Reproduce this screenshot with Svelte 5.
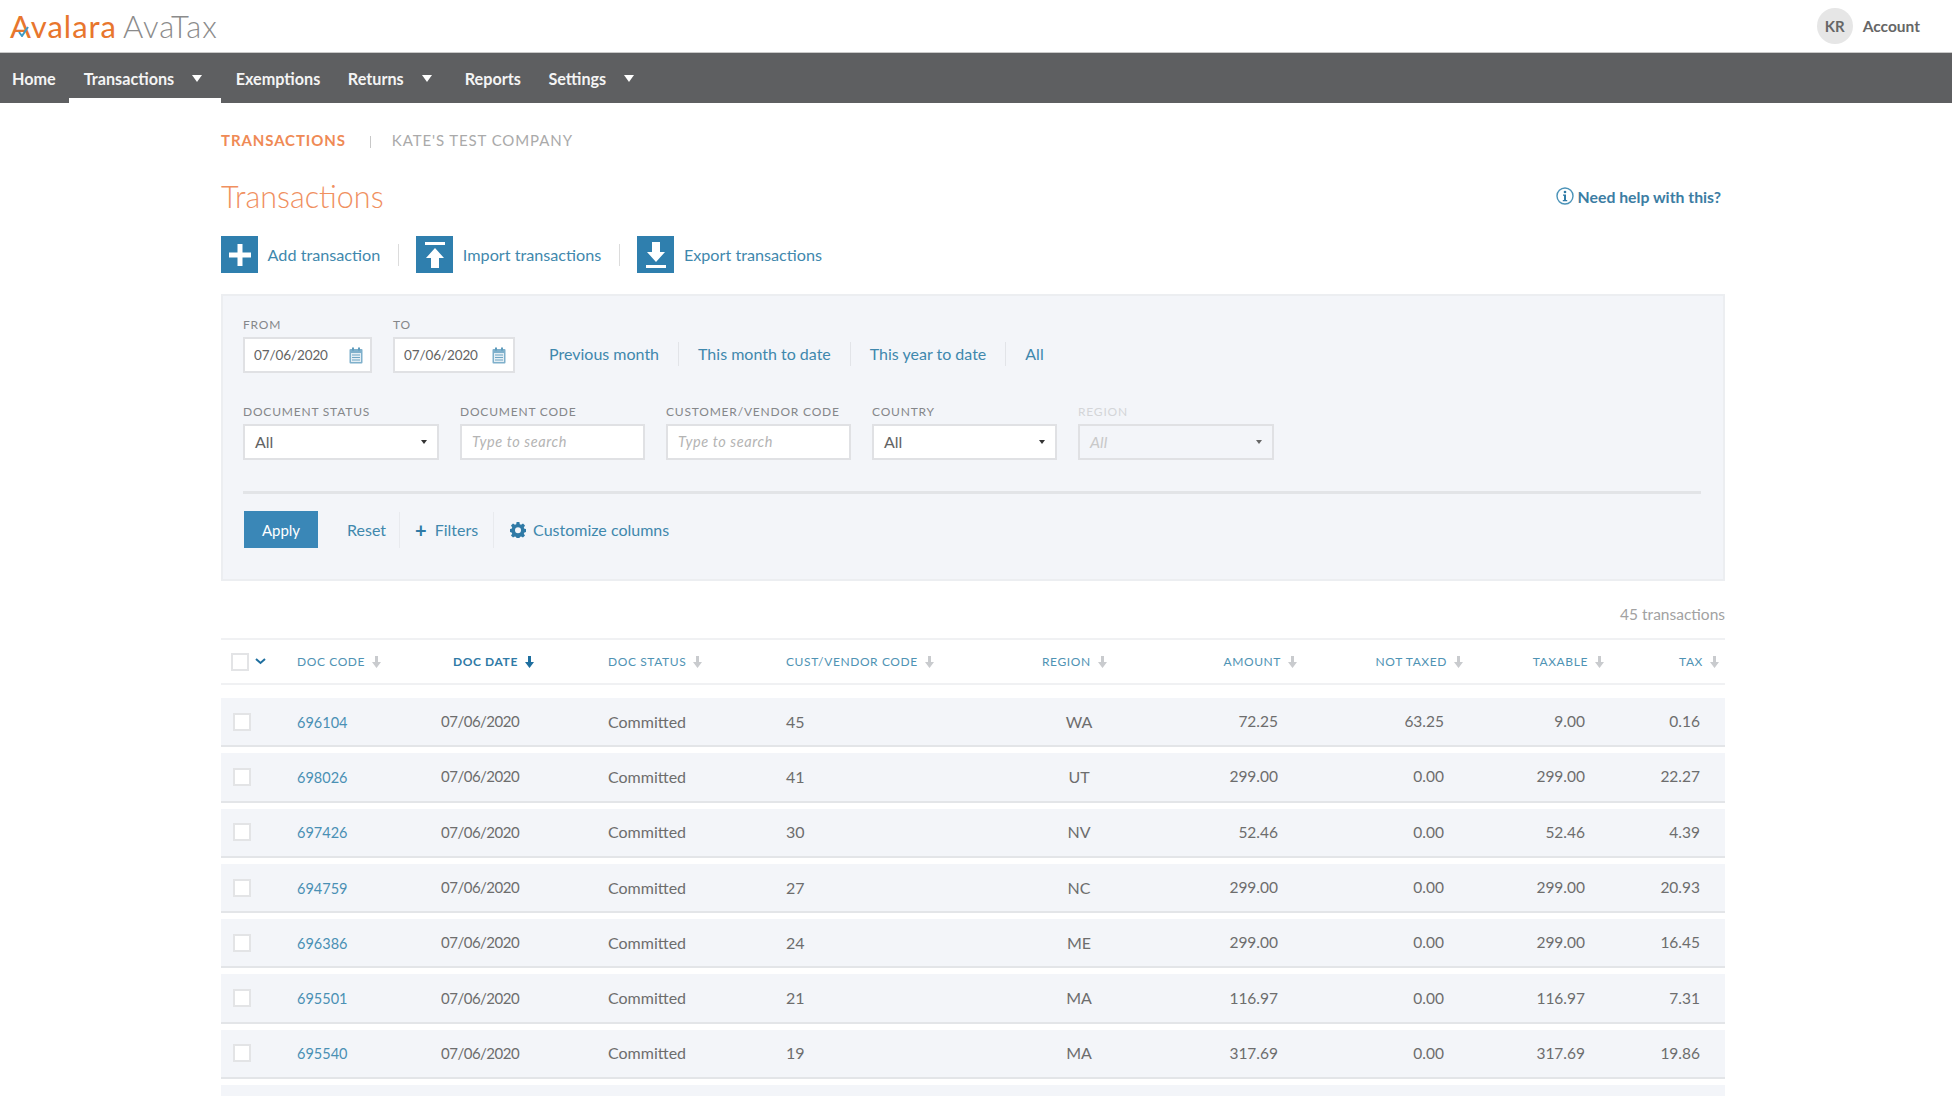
<script lang="ts">
  // Transaction rows as shown on the first page of the list.
  const rows = [
    { code: '696104', cust: '45', region: 'WA', amount: '72.25', notTaxed: '63.25', taxable: '9.00', tax: '0.16' },
    { code: '698026', cust: '41', region: 'UT', amount: '299.00', notTaxed: '0.00', taxable: '299.00', tax: '22.27' },
    { code: '697426', cust: '30', region: 'NV', amount: '52.46', notTaxed: '0.00', taxable: '52.46', tax: '4.39' },
    { code: '694759', cust: '27', region: 'NC', amount: '299.00', notTaxed: '0.00', taxable: '299.00', tax: '20.93' },
    { code: '696386', cust: '24', region: 'ME', amount: '299.00', notTaxed: '0.00', taxable: '299.00', tax: '16.45' },
    { code: '695501', cust: '21', region: 'MA', amount: '116.97', notTaxed: '0.00', taxable: '116.97', tax: '7.31' },
    { code: '695540', cust: '19', region: 'MA', amount: '317.69', notTaxed: '0.00', taxable: '317.69', tax: '19.86' }
  ];

  const columns = [
    { label: 'Doc code', cls: '' },
    { label: 'Doc date', cls: 'date', active: true },
    { label: 'Doc status', cls: '' },
    { label: 'Cust/vendor code', cls: '' },
    { label: 'Region', cls: 'region' },
    { label: 'Amount', cls: 'num' },
    { label: 'Not taxed', cls: 'num' },
    { label: 'Taxable', cls: 'num' },
    { label: 'Tax', cls: 'num' }
  ];
</script>

{#snippet calendar()}
  <svg class="cal" width="14" height="17" viewBox="0 0 14 17">
    <rect x="0.5" y="2" width="13" height="14.5" rx="1" fill="#7fb0cb" />
    <rect x="2" y="6" width="10" height="9" fill="#e4eef4" />
    <rect x="3" y="0.5" width="2" height="3" fill="#5f9cbd" />
    <rect x="9" y="0.5" width="2" height="3" fill="#5f9cbd" />
    <path d="M3 8h8M3 10.5h8M3 13h8" stroke="#6fa6c4" stroke-width="1" />
  </svg>
{/snippet}

{#snippet sortArrow(active: boolean)}
  <svg class="sort" class:active width="9" height="12" viewBox="0 0 9 12">
    <path d="M3 0h3v6h3L4.500 12 0 6h3z" fill="currentColor" />
  </svg>
{/snippet}

<div class="page">
  <header class="topbar">
    <div class="logo">
      <span class="logo-mark">Avalara</span>
      <svg class="logo-check" width="13" height="11" viewBox="0 0 13 11">
        <path d="M1 6l3 4 6-9" fill="none" stroke="#3f9ac4" stroke-width="2" />
      </svg>
      <span class="logo-product">AvaTax</span>
    </div>
    <div class="account">
      <span class="avatar">KR</span>
      <span class="account-label">Account</span>
    </div>
  </header>

  <nav class="nav">
    <span class="nav-item home">Home</span>
    <span class="nav-item current">Transactions<i class="caret"></i></span>
    <span class="nav-item plain">Exemptions</span>
    <span class="nav-item menu">Returns<i class="caret"></i></span>
    <span class="nav-item plain">Reports</span>
    <span class="nav-item menu">Settings<i class="caret"></i></span>
  </nav>

  <main class="content">
    <div class="breadcrumb">
      <span class="crumb-current">Transactions</span>
      <span class="crumb-sep"></span>
      <span class="crumb-company">Kate's test company</span>
    </div>

    <div class="title-row">
      <h1>Transactions</h1>
      <a class="help" href="#help">
        <svg width="18" height="18" viewBox="0 0 18 18">
          <circle cx="9" cy="9" r="8" fill="none" stroke="#4b93b8" stroke-width="1.400" />
          <circle cx="9" cy="5" r="1.300" fill="#2f7aa6" />
          <path d="M7 7.500h3v5.500h1.200v1.200H6.800V13H8V8.700H7z" fill="#2f7aa6" />
        </svg>
        Need help with this?
      </a>
    </div>

    <div class="actions">
      <a class="action" href="#add">
        <span class="action-icon">
          <svg width="22" height="22" viewBox="0 0 22 22"><path d="M8.500 0h5v8.500H22v5h-8.500V22h-5v-8.500H0v-5h8.500z" fill="#fff" /></svg>
        </span>
        Add transaction
      </a>
      <span class="action-sep"></span>
      <a class="action" href="#import">
        <span class="action-icon">
          <svg width="22" height="28" viewBox="0 0 22 28"><path d="M1 1h20v3H1zM11 7l9 10h-5v10H7V17H2z" fill="#fff" /></svg>
        </span>
        Import transactions
      </a>
      <span class="action-sep"></span>
      <a class="action" href="#export">
        <span class="action-icon">
          <svg width="22" height="28" viewBox="0 0 22 28"><path d="M7 1h8v10h5L11 21 2 11h5zM1 24h20v3H1z" fill="#fff" /></svg>
        </span>
        Export transactions
      </a>
    </div>

    <section class="filters">
      <div class="date-row">
        <label class="field">
          <span class="label">From</span>
          <span class="input date-input from">07/06/2020 {@render calendar()}</span>
        </label>
        <label class="field">
          <span class="label">To</span>
          <span class="input date-input to">07/06/2020 {@render calendar()}</span>
        </label>
        <div class="presets">
          <a href="#prev">Previous month</a>
          <a href="#month">This month to date</a>
          <a href="#year">This year to date</a>
          <a href="#all">All</a>
        </div>
      </div>

      <div class="select-row">
        <label class="field w-status">
          <span class="label">Document status</span>
          <span class="input select">All<i class="mini-caret"></i></span>
        </label>
        <label class="field w-code">
          <span class="label">Document code</span>
          <span class="input placeholder">Type to search</span>
        </label>
        <label class="field w-code">
          <span class="label">Customer/vendor code</span>
          <span class="input placeholder">Type to search</span>
        </label>
        <label class="field w-code">
          <span class="label">Country</span>
          <span class="input select">All<i class="mini-caret"></i></span>
        </label>
        <label class="field w-status disabled">
          <span class="label">Region</span>
          <span class="input select">All<i class="mini-caret"></i></span>
        </label>
      </div>

      <div class="button-row">
        <button class="apply">Apply</button>
        <a class="tool reset" href="#reset">Reset</a>
        <a class="tool filters-link" href="#filters"><span class="plus">+</span>Filters</a>
        <a class="tool customize" href="#columns">
          <svg width="16" height="16" viewBox="0 0 16 16">
            <path fill="#2f7aa6" fill-rule="evenodd" d="M6.600 0h2.800l.4 2.200 1.300.6 1.900-1.200 2 2-1.200 1.900.6 1.300 2.100.4v2.800l-2.100.4-.6 1.300 1.200 1.900-2 2-1.900-1.200-1.300.6-.4 2.100H6.600l-.4-2.100-1.300-.6L3 15.600l-2-2 1.200-1.900-.6-1.300L-.500 10V7.200l2.100-.4.600-1.300L1 3.600l2-2 1.900 1.200 1.300-.6zM8 5.200a3 3 0 1 0 0 6 3 3 0 0 0 0-6z" />
          </svg>
          Customize columns
        </a>
      </div>
    </section>

    <div class="count">45 transactions</div>

    <div class="thead grid">
      <div class="head-check">
        <span class="checkbox"></span>
        <svg width="11" height="7" viewBox="0 0 11 7"><path d="M1 1l4.500 4L10 1" fill="none" stroke="#1f6f9f" stroke-width="2" /></svg>
      </div>
      {#each columns as col}
        <div class="th {col.cls}" class:active={col.active}>
          <span>{col.label}</span>{@render sortArrow(!!col.active)}
        </div>
      {/each}
    </div>

    <div class="tbody">
      {#each rows as row}
        <div class="tr grid">
          <div class="cell-check"><span class="checkbox"></span></div>
          <div><a class="doc-link" href="#doc">{row.code}</a></div>
          <div class="cell-date">07/06/2020</div>
          <div>Committed</div>
          <div>{row.cust}</div>
          <div class="cell-region">{row.region}</div>
          <div class="cell-num">{row.amount}</div>
          <div class="cell-num">{row.notTaxed}</div>
          <div class="cell-num">{row.taxable}</div>
          <div class="cell-num">{row.tax}</div>
        </div>
      {/each}
      <div class="tr grid"></div>
    </div>
  </main>
</div>

<style>
  :global(body) {
    margin: 0;
    background: #fff;
  }

  .page {
    height: 1096px;
    overflow: hidden;
    font-family: Lato, "Open Sans", sans-serif;
    font-size: 16px;
    color: #6d6d6d;
  }

  a {
    color: #3f88ad;
    text-decoration: none;
  }

  /* top bar */
  .topbar {
    height: 52px;
    display: flex;
    align-items: center;
    justify-content: space-between;
    padding: 0 32px 0 10px;
    border-bottom: 1px solid #c9c9c9;
    box-sizing: content-box;
  }

  .logo {
    position: relative;
    display: flex;
    align-items: baseline;
    gap: 6px;
    font-size: 31px;
    line-height: 1;
  }

  .logo-mark {
    color: #e8762d;
    letter-spacing: 1px;
  }

  .logo-product {
    color: #8b8b8b;
    font-weight: 300;
    letter-spacing: 0.9px;
  }

  .logo-check {
    position: absolute;
    left: 8px;
    top: 15px;
  }

  .account {
    display: flex;
    align-items: center;
    gap: 10px;
  }

  .avatar {
    width: 36px;
    height: 36px;
    border-radius: 50%;
    background: #e6e6e6;
    display: flex;
    align-items: center;
    justify-content: center;
    font-weight: 700;
    font-size: 15px;
    color: #666;
  }

  .account-label {
    color: #666;
    font-weight: 700;
    font-size: 15.500px;
  }

  /* nav */
  .nav {
    height: 50px;
    background: #5e5f61;
    display: flex;
    align-items: stretch;
    color: #fff;
    font-size: 16.200px;
  }

  .nav-item {
    display: flex;
    align-items: center;
    padding: 0 14.500px;
    color: #f4f4f4;
    font-weight: 700;
  }

  .nav-item.home {
    padding: 0 13.500px 0 12px;
  }

  .nav-item.plain {
    padding-right: 13px;
  }

  .nav-item.menu {
    padding-right: 18.500px;
  }

  .nav-item.current {
    position: relative;
    padding-right: 19px;
  }

  .nav-item.current::after {
    content: "";
    position: absolute;
    left: 0;
    right: 0;
    bottom: 0;
    height: 5px;
    background: #fff;
  }

  .caret {
    width: 0;
    height: 0;
    margin-left: 18px;
    border-left: 5.500px solid transparent;
    border-right: 5.500px solid transparent;
    border-top: 7px solid #fff;
  }

  /* content */
  .content {
    width: 1504px;
    margin-left: 221px;
  }

  .breadcrumb {
    height: 20px;
    margin-top: 27px;
    display: flex;
    align-items: center;
    text-transform: uppercase;
    font-size: 15px;
    letter-spacing: 0.9px;
  }

  .crumb-current {
    color: #ef8a55;
    font-weight: 700;
  }

  .crumb-sep {
    width: 1px;
    height: 12px;
    margin: 4px 21px 0 24px;
    background: #c8c8c8;
  }

  .crumb-company {
    color: #aaa;
  }

  .title-row {
    height: 40px;
    margin-top: 26px;
    display: flex;
    align-items: center;
    justify-content: space-between;
  }

  h1 {
    margin: 0;
    font-size: 30.500px;
    font-weight: 300;
    color: #f0905f;
  }

  .help {
    display: flex;
    align-items: center;
    gap: 4px;
    margin-right: 4px;
    font-weight: 700;
    font-size: 15.800px;
    color: #3c7da3;
  }

  .actions {
    height: 37px;
    margin-top: 20px;
    display: flex;
    align-items: center;
    font-size: 16.200px;
  }

  .action {
    display: flex;
    align-items: center;
    gap: 9.600px;
  }

  .action-icon {
    width: 37px;
    height: 37px;
    background: #2f7fae;
    display: flex;
    align-items: center;
    justify-content: center;
  }

  .action-sep {
    width: 1px;
    height: 22px;
    margin: 0 17.500px;
    background: #dcdcdc;
  }

  /* filter panel */
  .filters {
    box-sizing: border-box;
    height: 287px;
    margin-top: 21px;
    padding: 22px 22px 0 20px;
    background: #f3f5f9;
    border: 2px solid #eceef1;
  }

  .date-row {
    display: flex;
    align-items: flex-end;
    gap: 21px;
  }

  .field {
    display: flex;
    flex-direction: column;
    gap: 5px;
  }

  .label {
    font-size: 12px;
    letter-spacing: 0.8px;
    text-transform: uppercase;
    color: #85878a;
    line-height: 14px;
  }

  .input {
    box-sizing: border-box;
    height: 36px;
    display: flex;
    align-items: center;
    padding: 0 10px;
    background: #fff;
    border: 2px solid #e0e1e4;
    font-size: 15px;
    color: #636363;
    position: relative;
  }

  .date-input {
    justify-content: space-between;
    padding: 0 7px 0 9px;
    font-size: 13.500px;
    letter-spacing: -0.1px;
  }

  .date-input.from {
    width: 129px;
  }

  .date-input.to {
    width: 122px;
  }

  .presets {
    display: flex;
    align-items: center;
    height: 36px;
    margin: 0 0 1px 13px;
  }

  .presets a {
    padding: 2px 19px;
    border-right: 1px solid #e2e4e8;
    line-height: 20px;
  }

  .presets a:first-child {
    padding-left: 0;
  }

  .presets a:last-child {
    border-right: none;
  }

  .select-row {
    display: flex;
    gap: 21px;
    margin-top: 31.500px;
  }

  .w-status {
    width: 196px;
  }

  .w-code {
    width: 185px;
  }

  .select {
    justify-content: space-between;
    font-size: 16px;
  }

  .mini-caret {
    width: 0;
    height: 0;
    border-left: 3.500px solid transparent;
    border-right: 3.500px solid transparent;
    border-top: 4px solid #333;
  }

  .placeholder {
    font-style: italic;
    color: #b4b4b4;
    font-size: 14.500px;
    letter-spacing: 0.6px;
  }

  .disabled .label {
    color: #d4d5d8;
  }

  .disabled .input {
    background: #f3f5f9;
    color: #c9c9c9;
    font-style: italic;
  }

  .disabled .mini-caret {
    border-top-color: #666;
  }

  .button-row {
    display: flex;
    align-items: center;
    margin-top: 31px;
    padding-top: 17.500px;
    border-top: 3px solid #e2e4e7;
  }

  .apply {
    width: 74px;
    height: 37px;
    margin: 0 29px 0 1px;
    padding: 0;
    border: none;
    background: #3a87b7;
    color: #fff;
    font-family: inherit;
    font-size: 15px;
  }

  .tool {
    display: flex;
    align-items: center;
    height: 36px;
  }

  .reset {
    padding-right: 13px;
    border-right: 1px solid #e8eaee;
  }

  .filters-link {
    padding: 0 15px;
    border-right: 1px solid #e8eaee;
  }

  .plus {
    margin-right: 8px;
    font-size: 20px;
    font-weight: 700;
    color: #2f7aa6;
    line-height: 1;
  }

  .customize {
    gap: 7px;
    padding-left: 16px;
  }

  .count {
    height: 20px;
    margin-top: 24px;
    text-align: right;
    font-size: 15.500px;
    color: #a2a2a2;
  }

  /* table */
  .grid {
    display: grid;
    grid-template-columns: 76px 144px 167px 178px 230px 126px 155px 166px 141px 115px 6px;
    align-items: center;
  }

  .thead {
    box-sizing: border-box;
    height: 47px;
    margin-top: 13px;
    border-top: 2px solid #f0f1f3;
    border-bottom: 2px solid #f0f1f3;
    font-size: 12px;
    letter-spacing: 0.6px;
    text-transform: uppercase;
    color: #4f93b4;
  }

  .head-check {
    display: flex;
    align-items: center;
    gap: 6px;
    padding-left: 10px;
  }

  .th {
    display: flex;
    align-items: center;
    gap: 7px;
  }

  .th.date {
    padding-left: 12px;
    color: #2f7aa6;
    font-weight: 700;
  }

  .th.region {
    padding-left: 26px;
  }

  .th.num {
    justify-content: flex-end;
  }

  .sort {
    color: #c9cbce;
  }

  .sort.active {
    color: #1f6f9f;
  }

  .tbody {
    display: flex;
    flex-direction: column;
    gap: 6px;
    margin-top: 13px;
  }

  .tr {
    box-sizing: border-box;
    height: 49.300px;
    flex-shrink: 0;
    padding-bottom: 1px;
    background: #f3f5f9;
    border-bottom: 2px solid #e3e5e8;
  }

  .cell-check {
    padding: 1px 0 0 12px;
    display: flex;
  }

  .checkbox {
    box-sizing: border-box;
    display: block;
    width: 18px;
    height: 18px;
    background: #fff;
    border: 2px solid #e3e4e6;
  }

  .doc-link {
    color: #4a90b4;
    font-size: 14.500px;
  }

  .cell-date {
    font-size: 15px;
    letter-spacing: -0.5px;
  }

  .cell-region {
    text-align: center;
  }

  .cell-num {
    text-align: right;
    padding-right: 19px;
    font-size: 15.500px;
  }
</style>
